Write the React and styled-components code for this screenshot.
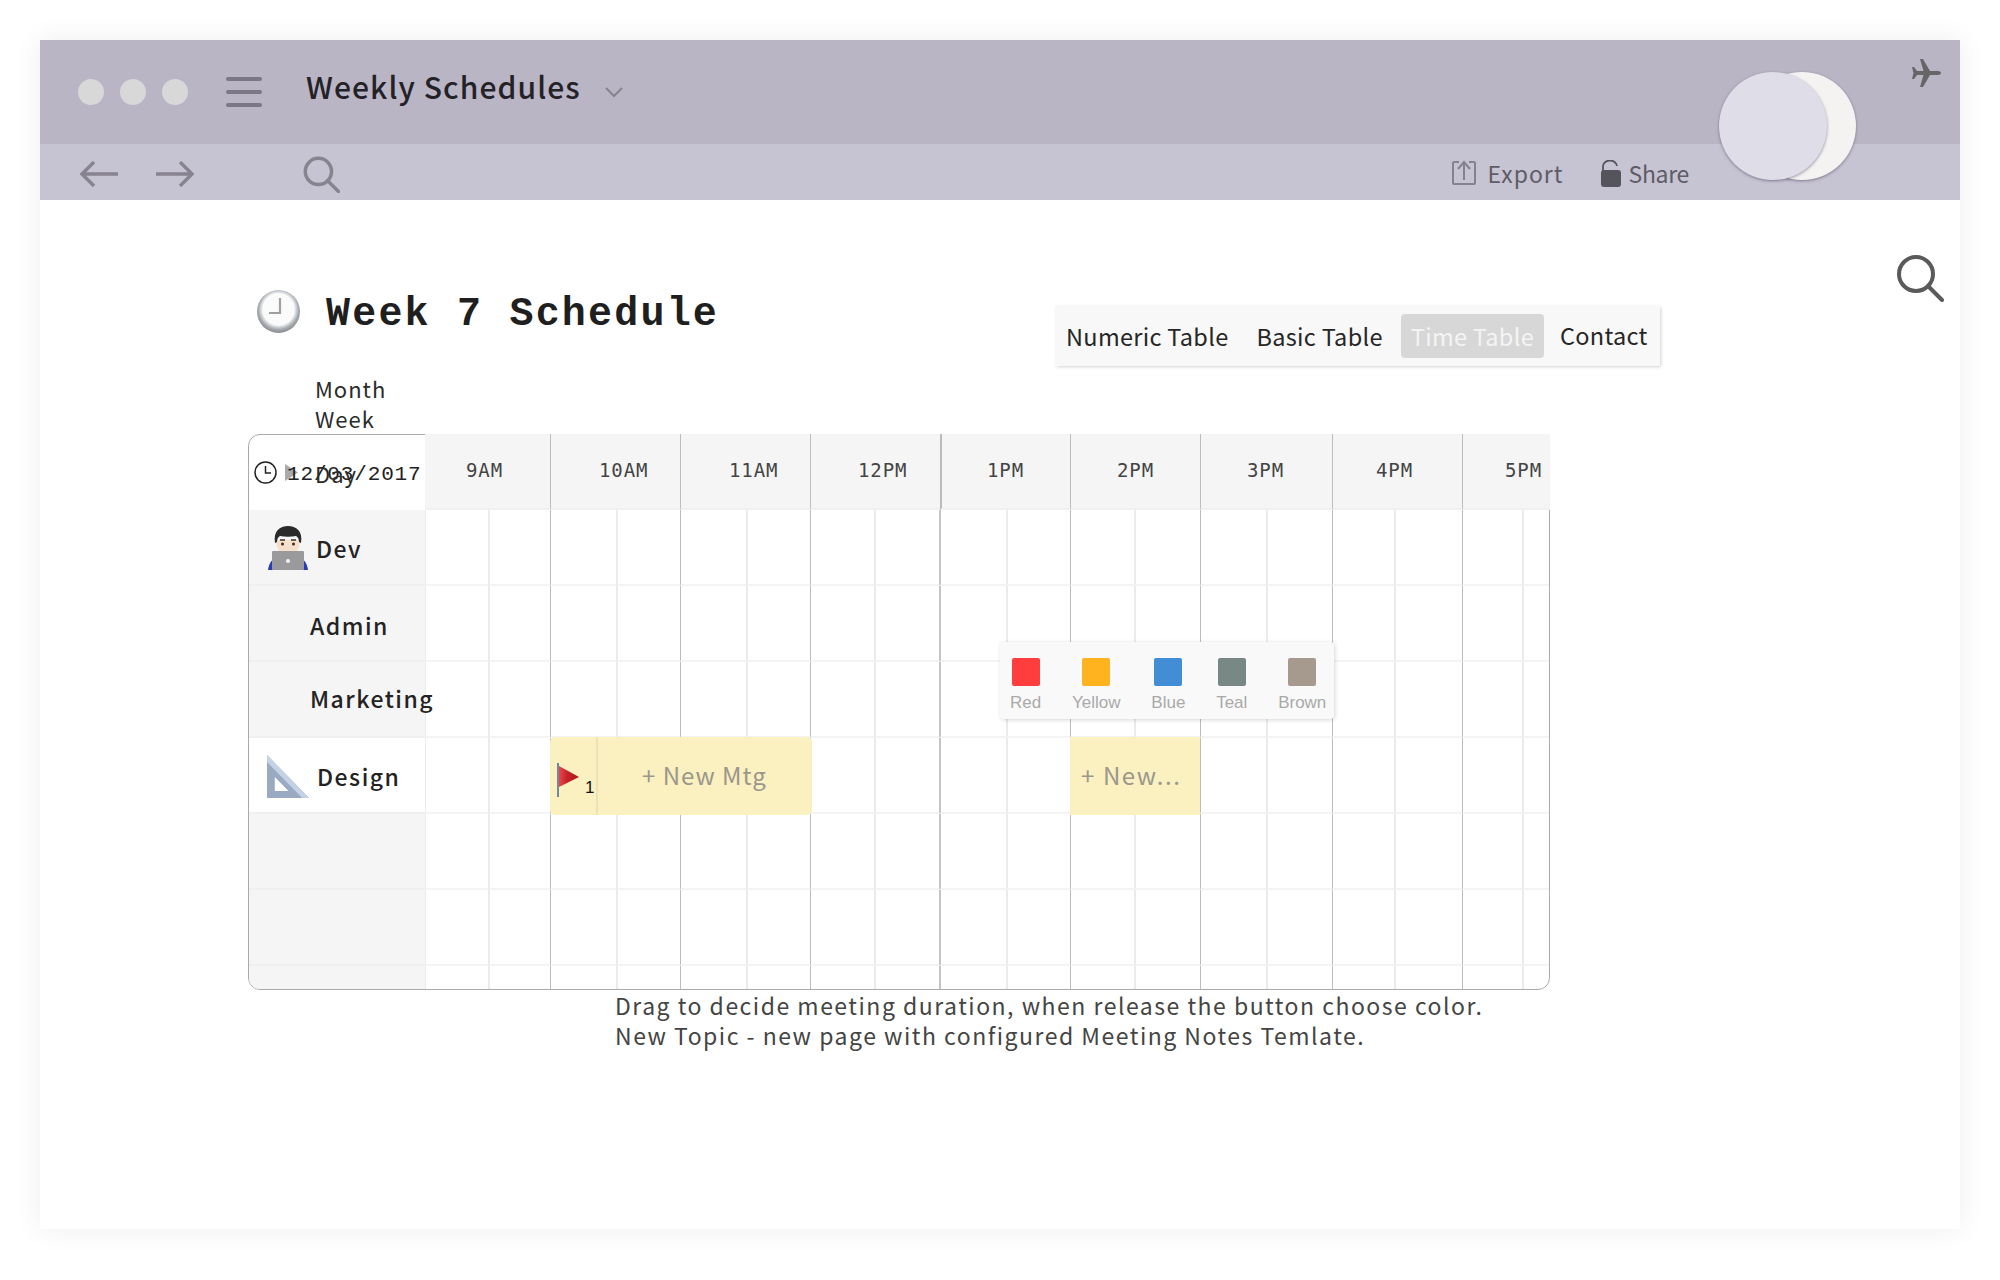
import React from 'react'
import styled, { createGlobalStyle } from 'styled-components'

const GlobalStyle = createGlobalStyle`
  html, body { margin: 0; padding: 0; background: #fff; }
  * { box-sizing: border-box; }
  body { font-family: "Noto Sans CJK SC", "Noto Sans", sans-serif; color: #222; }
`

const MONO = `"DejaVu Sans Mono", "Liberation Mono", monospace`

const Page = styled.div`
  width: 2000px;
  height: 1280px;
  padding: 40px 40px 51px 40px;
`

const Win = styled.div`
  position: relative;
  height: 100%;
  background: #fff;
  box-shadow: 0 0 28px rgba(0, 0, 0, 0.07);
`

const TitleBar = styled.header`
  display: flex;
  align-items: center;
  height: 104px;
  padding-left: 38px;
  background: #b9b5c5;
`

const Lights = styled.div`
  display: flex;
  gap: 16px;
`

const Light = styled.span`
  width: 26px;
  height: 26px;
  border-radius: 50%;
  background: #d8d8d8;
`

const Burger = styled.div`
  display: flex;
  flex-direction: column;
  gap: 9px;
  width: 36px;
  margin-left: 38px;
  span {
    height: 4px;
    border-radius: 2px;
    background: #7b7885;
  }
`

const DocTitle = styled.div`
  margin: 0 0 13px 44px;
  font-size: 30px;
  font-weight: 500;
  letter-spacing: 1.1px;
  line-height: 40px;
  color: #232226;
`

const Chevron = styled.svg`
  margin: 0 0 0 24px;
`

const SubBar = styled.div`
  display: flex;
  align-items: center;
  height: 56px;
  padding: 4px 271px 0 40px;
  background: #c6c3d2;
`

const NavGap = styled.span`
  width: ${(p) => p.$w}px;
`

const SubAction = styled.div`
  display: flex;
  align-items: center;
  gap: ${(p) => p.$gap}px;
  margin: -2px 0 0 ${(p) => p.$left || 0};
  font-size: 23px;
  letter-spacing: ${(p) => p.$track}px;
  line-height: 30px;
  color: #5e5c66;
`

const Moons = styled.div`
  position: absolute;
  top: 32px;
  left: 1679px;
  width: 138px;
  height: 108px;
`

const Moon = styled.span`
  position: absolute;
  top: 0;
  left: ${(p) => p.$left}px;
  width: 108px;
  height: 108px;
  border-radius: 50%;
  background: ${(p) => p.$bg};
  box-shadow: 0 1px 3px rgba(70, 60, 90, 0.55);
`

const Plane = styled.svg`
  position: absolute;
  top: 19px;
  left: 1872px;
`

const Body = styled.main`
  padding: 54px 0 0 208px;
`

const HeadRow = styled.div`
  display: flex;
  align-items: flex-start;
`

const ClockEmoji = styled.svg`
  margin: 36px 0 0 9px;
  flex: none;
`

const PageTitle = styled.h1`
  margin: 35px 0 0 26px;
  font-family: "Liberation Mono", monospace;
  font-size: 40px;
  font-weight: 700;
  letter-spacing: 2.2px;
  line-height: 52px;
  color: #1f1f1f;
  white-space: nowrap;
`

const Tabs = styled.nav`
  display: flex;
  align-items: center;
  height: 60px;
  width: 604px;
  margin: 52px 0 0 337px;
  padding-left: 10px;
  background: #f8f8f8;
  box-shadow: 1px 1px 3px rgba(0, 0, 0, 0.18);
`

const Tab = styled.span`
  height: 44px;
  margin-left: ${(p) => p.$left}px;
  padding: 0 ${(p) => (p.$active ? 10 : 0)}px;
  border-radius: 4px;
  font-size: 23.5px;
  letter-spacing: 0.3px;
  line-height: ${(p) => p.$line || 44}px;
  white-space: nowrap;
  color: ${(p) => (p.$active ? '#f4f4f4' : '#262626')};
  background: ${(p) => (p.$active ? '#d7d7d7' : 'transparent')};
`

const BigSearch = styled.div`
  flex: none;
  display: flex;
  margin: 0 16px 0 auto;
`

const ViewList = styled.ul`
  list-style: none;
  height: 61px;
  margin: 7px 0 0 67px;
  padding: 0;
  font-size: 22px;
  letter-spacing: 1px;
  line-height: 30px;
  color: #2b2b2b;
`

const Frame = styled.div`
  position: relative;
  width: 1302px;
  height: 556px;
  border: 1px solid #aaa;
  border-radius: 12px;
`

const TRACKS = [64, 61, 67, 63, 67, 63, 65, 65, 67, 63, 65, 65, 67, 65, 63, 67, 61, 26]

const RowGrid = styled.div`
  display: grid;
  grid-template-columns: 176px ${TRACKS.map((t) => `${t}px`).join(' ')};
  height: ${(p) => p.$h}px;
`

const CornerCell = styled.div`
  position: relative;
  display: flex;
  align-items: center;
  padding-left: 5px;
`

const DateText = styled.span`
  margin: 0 0 0 -11px;
  font-family: "Liberation Mono", monospace;
  font-size: 21px;
  letter-spacing: 0.85px;
  white-space: nowrap;
  color: #222;
  line-height: 1;
  transform: translateY(2px);
`

const DayText = styled.span`
  position: absolute;
  left: 66px;
  top: 23px;
  font-size: 22px;
  letter-spacing: 1px;
  line-height: 30px;
  color: #2b2b2b;
`

const HourCell = styled.div`
  grid-column: span ${(p) => p.$span};
  margin-top: -1px;
  margin-right: ${(p) => (p.$last ? -1 : 0)}px;
  padding: 23px 0 0 ${(p) => p.$pad}px;
  background: #f5f5f5;
  border-left: ${(p) => (p.$mid ? '2px solid #bbb' : p.$first ? 'none' : '1px solid #bdbdbd')};
  border-bottom: 2px solid #f0f0f0;
  font-family: ${MONO};
  font-size: 19px;
  letter-spacing: 0.9px;
  line-height: 26px;
  color: #444;
`

const LabelCell = styled.div`
  position: relative;
  z-index: 1;
  grid-row: 1;
  grid-column: 1;
  display: flex;
  align-items: center;
  gap: 8px;
  padding: ${(p) => p.$drop || 0}px 0 ${(p) => p.$rise || 0}px ${(p) => p.$indent || 0}px;
  background: ${(p) => (p.$plain ? '#fff' : '#f5f5f5')};
  border-bottom: ${(p) => (p.$open ? 'none' : '2px solid #f0f0f0')};
  border-bottom-left-radius: ${(p) => (p.$open ? 11 : 0)}px;
  font-size: 23px;
  font-weight: 500;
  letter-spacing: 1.5px;
  white-space: nowrap;
  color: #232323;
`

const Slot = styled.div`
  grid-row: 1;
  grid-column: ${(p) => p.$col};
  margin-left: ${(p) => (p.$line === 'hour' ? 0 : -1)}px;
  border-left: ${(p) => {
    if (p.$line === 'mid') return '2px solid #c4c4c4'
    if (p.$line === 'hour') return '1px solid #bdbdbd'
    return '2px solid #ebebeb'
  }};
  border-bottom: ${(p) => (p.$open ? 'none' : '2px solid #f4f4f4')};
`

const Meeting = styled.div`
  grid-row: 1;
  grid-column: ${(p) => p.$from} / ${(p) => p.$to};
  z-index: 1;
  display: flex;
  margin: -1px ${(p) => (p.$round ? -2 : 0)}px -1px 0;
  border-radius: ${(p) => (p.$round ? 5 : 0)}px;
  background: #fbf0c0;
`

const FlagPart = styled.div`
  position: relative;
  flex: none;
  width: 48px;
  border-right: 2px solid #ebe2b6;
  svg {
    position: absolute;
    left: 7px;
    top: 26px;
  }
  span {
    position: absolute;
    left: 35px;
    top: 41px;
    font-family: "Liberation Sans", sans-serif;
    font-size: 17px;
    line-height: 20px;
    color: #111;
  }
`

const MeetingText = styled.div`
  flex: 1;
  padding: 20px 0 0 ${(p) => p.$pad}px;
  font-size: 24px;
  letter-spacing: ${(p) => p.$track}px;
  line-height: 36px;
  white-space: nowrap;
  color: #9a978b;
`

const Palette = styled.div`
  position: absolute;
  left: 751px;
  top: 207px;
  z-index: 3;
  display: flex;
  gap: 30.8px;
  width: 334px;
  height: 77px;
  padding: 16px 0 0 10px;
  border-radius: 4px;
  background: #f9f9f9;
  box-shadow: 1px 1px 4px rgba(0, 0, 0, 0.16);
`

const Swatch = styled.div`
  display: flex;
  flex-direction: column;
  align-items: center;
  font-family: "Liberation Sans", sans-serif;
  font-size: 17px;
  line-height: 20px;
  color: #a9a9a9;
  &::before {
    content: '';
    width: 28px;
    height: 28px;
    margin-bottom: 7px;
    border-radius: 2px;
    background: ${(p) => p.$color};
  }
`

const Caption = styled.p`
  margin: 0 0 0 367px;
  font-size: 23px;
  letter-spacing: 1.5px;
  line-height: 30px;
  white-space: nowrap;
  color: #444;
`

const HOURS = [
  { label: '9AM', span: 2, pad: 41, first: true },
  { label: '10AM', span: 2, pad: 48 },
  { label: '11AM', span: 2, pad: 48 },
  { label: '12PM', span: 2, pad: 47 },
  { label: '1PM', span: 2, pad: 45, mid: true },
  { label: '2PM', span: 2, pad: 46 },
  { label: '3PM', span: 2, pad: 46 },
  { label: '4PM', span: 2, pad: 43 },
  { label: '5PM', span: 2, pad: 42, last: true },
]

const SWATCHES = [
  ['Red', '#ff3d3d'],
  ['Yellow', '#ffb31f'],
  ['Blue', '#428dd4'],
  ['Teal', '#778885'],
  ['Brown', '#a69a8e'],
]

const lineKind = (i) => {
  if (i === 8) return 'mid'
  if (i > 0 && i % 2 === 0) return 'hour'
  return 'half'
}

const Slots = ({ open }) =>
  TRACKS.map((_, i) => <Slot key={i} $col={i + 2} $line={lineKind(i)} $open={open} />)

const ArrowIcon = ({ flip }) => (
  <svg width="38" height="26" viewBox="0 0 38 26" fill="none" stroke="#87848f" strokeWidth="3.4">
    {flip ? <path d="M0 13h35M24 1l12 12-12 12" /> : <path d="M38 13H3M14 1L2 13l12 12" />}
  </svg>
)

const SearchIcon = ({ size, color, stroke }) => (
  <svg width={size} height={size} viewBox="0 0 48 48" fill="none" stroke={color} strokeWidth={stroke} strokeLinecap="round">
    <circle cx="20" cy="20" r="17" />
    <path d="M32 32l14 14" />
  </svg>
)

const ManEmoji = () => (
  <svg width="40" height="44" viewBox="0 0 40 44">
    <path d="M0 44c1-7 4-11 8-12h24c4 1 7 5 8 12z" fill="#2a3bb5" />
    <path d="M8 14c0 9 5 16 12 16s12-7 12-16z" fill="#f6e0cb" />
    <path d="M7 17C5 5 12 0 20 0s15 5 13 17l-2-1c0-3-1-5-3-6-5 1-11 1-16 0-2 1-3 3-3 6z" fill="#2b2a2a" />
    <path d="M12 14h5M23 14h5" stroke="#3a302a" strokeWidth="1.400" />
    <circle cx="14.500" cy="18" r="1.500" fill="#3a2a20" />
    <circle cx="25.500" cy="18" r="1.500" fill="#3a2a20" />
    <rect x="4" y="25" width="32" height="19" rx="1" fill="#9a9a9c" />
    <circle cx="20" cy="35" r="2" fill="#f2f2f2" />
  </svg>
)

const SetSquare = () => (
  <svg width="42" height="43" viewBox="0 0 43 43" preserveAspectRatio="none">
    <path d="M0 0l43 43H0z" fill="#99aac2" />
    <path d="M0 0l43 43h-7L0 7z" fill="#c3d2e4" />
    <path d="M8 22l14 14H8z" fill="#fff" />
  </svg>
)

export default function App() {
  return (
    <Page>
      <GlobalStyle />
      <Win>
        <TitleBar>
          <Lights>
            <Light />
            <Light />
            <Light />
          </Lights>
          <Burger>
            <span />
            <span />
            <span />
          </Burger>
          <DocTitle>Weekly Schedules</DocTitle>
          <Chevron width="18" height="11" viewBox="0 0 18 11" fill="none" stroke="#87848f" strokeWidth="2">
            <path d="M1 1l8 8 8-8" />
          </Chevron>
        </TitleBar>
        <SubBar>
          <ArrowIcon />
          <NavGap $w={38} />
          <ArrowIcon flip />
          <NavGap $w={109} />
          <SearchIcon size={37} color="#87848f" stroke={4.5} />
          <SubAction $gap={11} $track={1} $left="auto">
            <svg width="24" height="26" viewBox="0 0 24 26" fill="none" stroke="#85828f" strokeWidth="2">
              <path d="M7 2H2a1 1 0 0 0-1 1v20a1 1 0 0 0 1 1h20a1 1 0 0 0 1-1V3a1 1 0 0 0-1-1h-5" />
              <path d="M12 20V3M6 9l6-7 6 7" />
            </svg>
            Export
          </SubAction>
          <SubAction $gap={7} $track={-0.3} $left="38px">
            <svg width="20" height="27" viewBox="0 0 20 27">
              <path d="M2 11V7a7 6 0 0 1 14-1" fill="none" stroke="#55535b" strokeWidth="1.8" />
              <rect x="0" y="10" width="20" height="17" rx="3" fill="#55535b" />
            </svg>
            Share
          </SubAction>
        </SubBar>
        <Moons>
          <Moon $left={29} $bg="#f4f3f1" />
          <Moon $left={0} $bg="#dfdde8" />
        </Moons>
        <Plane width="30" height="28" viewBox="0 0 30 28" fill="#666">
          <path d="M29 14c0-1.200-1.500-2-3-2h-8L11 0H8l3.500 12H5L2 8H0l1.500 6L0 20h2l3-4h6.500L8 28h3l7-12h8c1.500 0 3-.8 3-2z" />
        </Plane>
        <Body>
          <HeadRow>
            <ClockEmoji width="43" height="43" viewBox="0 0 43 43">
              <defs>
                <radialGradient id="clockFace" cx="50%" cy="45%" r="55%">
                  <stop offset="0.66" stopColor="#fbfbfb" />
                  <stop offset="0.84" stopColor="#a9adb2" />
                  <stop offset="1" stopColor="#868a8e" />
                </radialGradient>
              </defs>
              <circle cx="21.500" cy="21.500" r="21.500" fill="url(#clockFace)" />
              <path d="M23 8v15H12" fill="none" stroke="#a0a0a0" strokeWidth="2.200" />
            </ClockEmoji>
            <PageTitle>Week 7 Schedule</PageTitle>
            <Tabs>
              <Tab $left={0}>Numeric Table</Tab>
              <Tab $left={28}>Basic Table</Tab>
              <Tab $left={18} $active>Time Table</Tab>
              <Tab $left={16} $line={42}>Contact</Tab>
            </Tabs>
            <BigSearch>
              <SearchIcon size={48} color="#5a5a5a" stroke={4} />
            </BigSearch>
          </HeadRow>
          <ViewList>
            <li>Month</li>
            <li>Week</li>
          </ViewList>
          <Frame>
            <RowGrid $h={75}>
              <CornerCell>
                <svg width="23" height="23" viewBox="0 0 23 23" fill="none" stroke="#222" strokeWidth="1.500">
                  <circle cx="11.500" cy="11.500" r="10.500" />
                  <path d="M11.500 5v7H17" />
                </svg>
                <svg width="13" height="17" viewBox="0 0 13 17" style={{ marginLeft: 8 }}>
                  <path d="M0 0l13 8.500L0 17z" fill="#aaa" />
                </svg>
                <DateText>12/03/2017</DateText>
                <DayText>Day</DayText>
              </CornerCell>
              {HOURS.map((h) => (
                <HourCell key={h.label} $span={h.span} $pad={h.pad} $first={h.first} $mid={h.mid} $last={h.last}>
                  {h.label}
                </HourCell>
              ))}
            </RowGrid>
            <RowGrid $h={76}>
              <LabelCell $indent={19} $drop={2}>
                <ManEmoji />
                Dev
              </LabelCell>
              <Slots />
            </RowGrid>
            <RowGrid $h={76}>
              <LabelCell $indent={61} $drop={4}>Admin</LabelCell>
              <Slots />
            </RowGrid>
            <RowGrid $h={76}>
              <LabelCell $indent={61} $rise={3}>Marketing</LabelCell>
              <Slots />
            </RowGrid>
            <RowGrid $h={76}>
              <LabelCell $indent={18} $drop={2} $plain>
                <SetSquare />
                Design
              </LabelCell>
              <Slots />
              <Meeting $from={4} $to={8} $round>
                <FlagPart>
                  <svg width="24" height="34" viewBox="0 0 24 34">
                    <defs>
                      <linearGradient id="flagRed" x1="0" x2="1" y1="0" y2="0">
                        <stop offset="0" stopColor="#e8484c" />
                        <stop offset="0.4" stopColor="#c92226" />
                        <stop offset="1" stopColor="#a81a1c" />
                      </linearGradient>
                    </defs>
                    <rect x="0" y="0" width="2" height="34" fill="#6f8a9c" />
                    <path d="M2 3l20 11L2 24z" fill="url(#flagRed)" />
                  </svg>
                  <span>1</span>
                </FlagPart>
                <MeetingText $pad={44} $track={1}>+ New Mtg</MeetingText>
              </Meeting>
              <Meeting $from={12} $to={14}>
                <MeetingText $pad={11} $track={1.6}>+ New...</MeetingText>
              </Meeting>
            </RowGrid>
            <RowGrid $h={76}>
              <LabelCell />
              <Slots />
            </RowGrid>
            <RowGrid $h={76}>
              <LabelCell />
              <Slots />
            </RowGrid>
            <RowGrid $h={23}>
              <LabelCell $open />
              <Slots open />
            </RowGrid>
            <Palette>
              {SWATCHES.map(([name, color]) => (
                <Swatch key={name} $color={color}>{name}</Swatch>
              ))}
            </Palette>
          </Frame>
          <Caption>
            Drag to decide meeting duration, when release the button choose color.
            <br />
            New Topic - new page with configured Meeting Notes Temlate.
          </Caption>
        </Body>
      </Win>
    </Page>
  )
}
